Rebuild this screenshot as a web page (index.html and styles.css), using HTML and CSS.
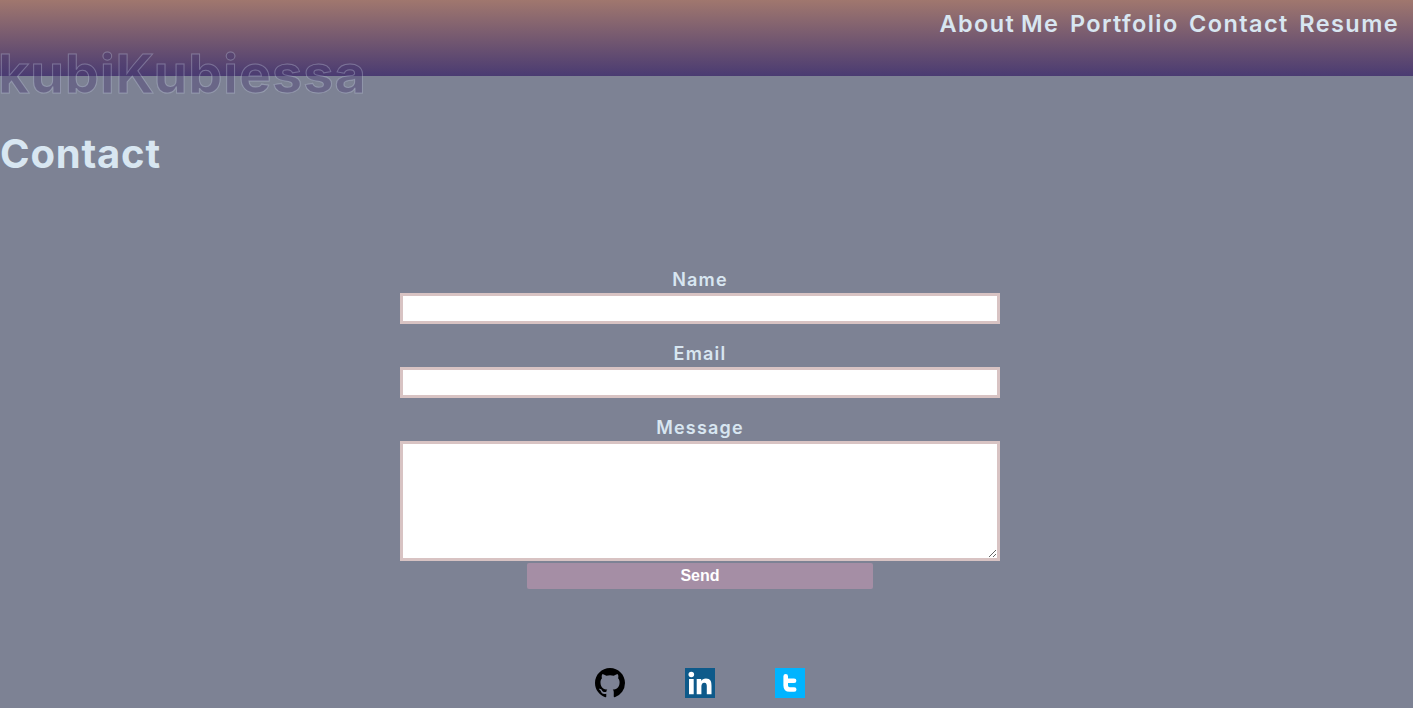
FILE: index.html
```html
<!DOCTYPE html>
<html lang="en">
<head>
<meta charset="utf-8">
<title>Contact</title>
<link rel="stylesheet" href="styles.css">
</head>
<body>
<header class="header">
  <nav class="nav">
    <a class="nav-about">About Me</a>
    <a>Portfolio</a>
    <a>Contact</a>
    <a>Resume</a>
  </nav>
  <div class="brand">kubiKubiessa</div>
</header>
<main class="main">
  <h1 class="title">Contact</h1>
  <form class="form">
    <label class="label" for="name">Name</label>
    <input class="field" id="name" type="text">
    <label class="label" for="email">Email</label>
    <input class="field" id="email" type="email">
    <label class="label" for="message">Message</label>
    <textarea class="field message" id="message"></textarea>
    <button class="send" type="button">Send</button>
  </form>
</main>
<footer class="footer">
  <svg class="icon" viewBox="0 0 16 16"><path d="M8 0C3.58 0 0 3.58 0 8c0 3.54 2.29 6.53 5.47 7.59.4.07.55-.17.55-.38 0-.19-.01-.82-.01-1.49-2.01.37-2.53-.49-2.69-.94-.09-.23-.48-.94-.82-1.13-.28-.15-.68-.52-.01-.53.63-.01 1.08.58 1.23.82.72 1.21 1.87.87 2.33.66.07-.52.28-.87.51-1.07-1.78-.2-3.64-.89-3.64-3.95 0-.87.31-1.59.82-2.15-.08-.2-.36-1.02.08-2.12 0 0 .67-.21 2.2.82a7.6 7.6 0 0 1 4 0c1.53-1.04 2.2-.82 2.2-.82.44 1.1.16 1.92.08 2.12.51.56.82 1.27.82 2.15 0 3.07-1.87 3.75-3.65 3.95.29.25.54.73.54 1.48 0 1.07-.01 1.93-.01 2.2 0 .21.15.46.55.38A8.01 8.01 0 0 0 16 8c0-4.42-3.58-8-8-8z"/></svg>
  <svg class="icon" viewBox="0 0 30 30"><path fill="#0e5a8a" d="M0 0h30v30H0z"/><g fill="#fff"><circle cx="6.3" cy="6.5" r="2.8"/><path d="M4 11h4.7v15.300H4zM11.700 11h4.500v2.100c.8-1.400 2.400-2.500 4.700-2.500 4.700 0 5.600 3.100 5.600 7.200v8.500h-4.700v-7.600c0-2-.2-4-2.500-4s-2.900 1.900-2.900 3.900v7.700h-4.700z"/></g></svg>
  <svg class="icon" viewBox="0 0 30 30"><path fill="#00b4ff" d="M0 0h30v30H0z"/><path fill="none" stroke="#fff" stroke-width="4.6" stroke-linecap="round" stroke-linejoin="round" d="M10.700 8.300v9.200q0 4 4 4h4.500M10.700 12.700h8.400"/></svg>
</footer>
</body>
</html>
```
FILE: styles.css
```css
* { box-sizing: border-box; }
body {
  margin: 0;
  height: 708px;
  overflow: hidden;
  background: #7d8294;
  color: #d8e6f1;
  font-family: Inter, sans-serif;
}
.header {
  height: 76px;
  background: linear-gradient(#a0776e, #4a3b72);
}
.nav {
  display: flex;
  justify-content: flex-end;
  gap: 10.5px;
  height: 48px;
  padding-right: 14px;
  font-size: 23.5px;
  font-weight: 600;
  line-height: 48px;
  letter-spacing: 1.4px;
}
.nav-about {
  word-spacing: -1.5px;
}
.brand {
  height: 68px;
  margin: -8px 0 0 -2px;
  font-size: 54px;
  font-weight: 700;
  line-height: 68px;
  letter-spacing: 1px;
  color: rgba(74, 59, 114, .4);
  -webkit-text-stroke: 1px rgba(216, 230, 241, .3);
}
.title {
  margin: 0;
  padding-top: 54px;
  font-size: 40px;
  font-weight: 700;
  line-height: 48px;
  letter-spacing: .8px;
}
.form {
  display: flex;
  flex-direction: column;
  align-items: center;
  width: 600px;
  margin: 89px 0 0 400px;
}
.label {
  height: 26px;
  font-size: 18px;
  font-weight: 600;
  line-height: 26px;
  letter-spacing: 1.2px;
}
.field {
  display: block;
  width: 600px;
  height: 31px;
  margin: 0 0 17px;
  border: 3px solid #d8c3c3;
  background: #fff;
  outline: none;
}
.message {
  height: 120px;
  margin-bottom: 2px;
}
.send {
  width: 346px;
  height: 26px;
  padding: 0;
  border: 0;
  border-radius: 2px;
  background: #a58ea5;
  color: #fff;
  font: 700 16px/26px "Liberation Sans", Arial, sans-serif;
}
.footer {
  display: flex;
  gap: 60px;
  margin: 79px 0 0 595px;
}
.icon {
  display: block;
  width: 30px;
  height: 30px;
}
```
